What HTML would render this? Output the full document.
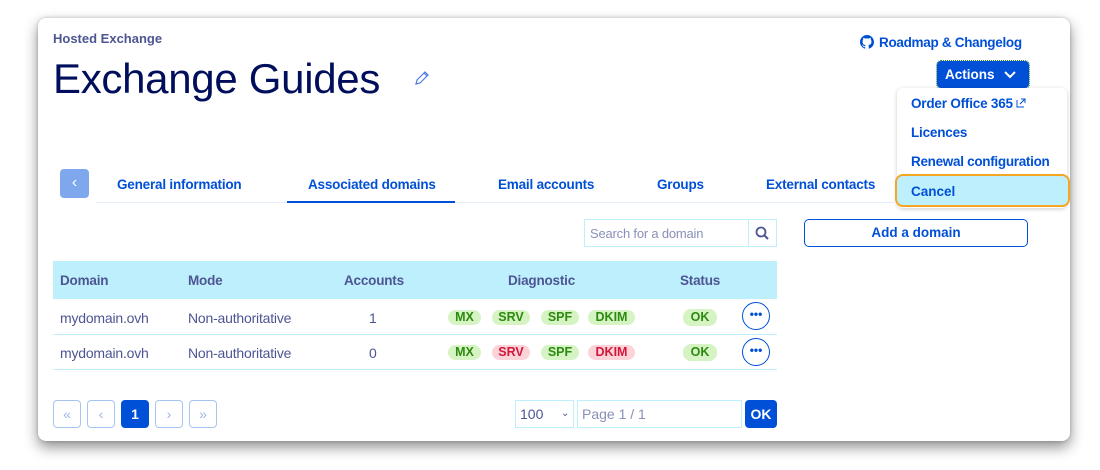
<!DOCTYPE html>
<html><head><meta charset="utf-8"><style>
*{box-sizing:border-box;margin:0;padding:0}
body{width:1100px;height:470px;background:#fff;font-family:"Liberation Sans",sans-serif;position:relative;overflow:hidden}
.card{position:absolute;left:38px;top:18px;width:1032px;height:423px;background:#fff;border-radius:8px;box-shadow:0 6px 14px rgba(0,0,0,.45),0 0 3px rgba(0,0,0,.2)}
.a{position:absolute;white-space:nowrap}
.b{font-weight:bold}
.blue{color:#0050d7}
.navy{color:#4d5592}
.tab{position:absolute;top:177px;font-size:13.5px;font-weight:bold;color:#0050d7;letter-spacing:-0.2px}
.pill{position:absolute;height:15px;border-radius:8px;font-size:12.5px;font-weight:bold;text-align:center;line-height:15px}
.g{background:#d6f3c4;color:#2d8a10}
.r{background:#fcd3d9;color:#d3173a}
.td{position:absolute;font-size:14px;color:#4d5592;letter-spacing:-0.2px}
.th{position:absolute;top:273px;font-size:13.5px;font-weight:bold;color:#4d5592;letter-spacing:-0.2px}
.dots{position:absolute;left:742px;width:28px;height:28px;border:1.5px solid #0050d7;border-radius:50%;color:#0050d7;font-weight:bold;text-align:center;line-height:22px;font-size:12px}
.pg{position:absolute;top:400px;width:28px;height:28px;border:1px solid #a7c3f0;border-radius:4px;color:#9cb6e6;text-align:center;line-height:26px;font-size:14px}
</style></head><body>
<div class="card"></div>
<div class="a b navy" style="left:53px;top:31px;font-size:13px">Hosted Exchange</div>
<div class="a" style="left:53px;top:55px;font-size:42px;color:#000e5c;letter-spacing:-0.3px">Exchange Guides</div>
<svg class="a" style="left:414px;top:70px" width="16" height="16" viewBox="0 0 16 16"><path d="M2 14l1-4 8-8 3 3-8 8z M10 3l3 3" fill="none" stroke="#4f7ae0" stroke-width="1.2"/></svg>
<svg class="a" style="left:860px;top:35px" width="14" height="14" viewBox="0 0 16 16"><path fill="#0050d7" d="M8 0C3.6 0 0 3.6 0 8c0 3.5 2.3 6.5 5.5 7.6.4.1.5-.2.5-.4v-1.4c-2.2.5-2.7-1-2.7-1-.4-.9-.9-1.2-.9-1.2-.7-.5.1-.5.1-.5.8.1 1.2.8 1.2.8.7 1.300 1.9.9 2.3.7.1-.5.3-.9.5-1.1-1.8-.2-3.6-.9-3.6-4 0-.9.3-1.6.8-2.100-.1-.2-.4-1 .1-2.100 0 0 .7-.2 2.2.8.6-.2 1.3-.3 2-.3s1.4.1 2 .3c1.5-1 2.2-.8 2.2-.8.4 1.1.2 1.9.1 2.1.5.6.8 1.3.8 2.1 0 3.1-1.9 3.7-3.6 3.9.3.3.5.8.5 1.5v2.2c0 .2.1.5.6.4C13.7 14.5 16 11.5 16 8c0-4.4-3.6-8-8-8z"/></svg>
<div class="a b blue" style="left:879px;top:35px;font-size:13.5px;letter-spacing:-0.3px">Roadmap &amp; Changelog</div>
<div class="a" style="left:937px;top:61px;width:92px;height:27px;background:#0050d7;border-radius:4px;outline:1px dotted #2a8a2a;color:#fff;font-weight:bold;font-size:13.5px;line-height:27px;padding-left:8px">Actions <svg style="position:absolute;left:66px;top:9px" width="14" height="9" viewBox="0 0 14 9"><path d="M2 2l5 5 5-5" fill="none" stroke="#fff" stroke-width="2"/></svg></div>
<div class="a" style="left:897px;top:88px;width:170px;height:120px;background:#fff;border-radius:6px;box-shadow:0 1px 4px rgba(0,0,0,.2)"></div>
<div class="a b blue" style="left:911px;top:96px;font-size:13.5px;letter-spacing:-0.2px">Order Office 365 <svg width="10" height="10" viewBox="0 0 10 10"><path d="M1 2v7h7M5 1h4v4M9 1L4 6" fill="none" stroke="#0050d7" stroke-width="1"/></svg></div>
<div class="a b blue" style="left:911px;top:125px;font-size:13.5px;letter-spacing:-0.2px">Licences</div>
<div class="a b blue" style="left:911px;top:154px;font-size:13.5px;letter-spacing:-0.3px">Renewal configuration</div>
<div class="a" style="left:895px;top:174px;width:175px;height:33px;background:#bdeffd;border:2.5px solid #f5a623;border-radius:8px"></div>
<div class="a b blue" style="left:911px;top:184px;font-size:13.5px">Cancel</div>
<div class="a" style="left:60px;top:169px;width:29px;height:29px;background:#7fa7ee;border-radius:4px;color:#fff;text-align:center;line-height:27px;font-size:16px">‹</div>
<div class="a" style="left:96px;top:202px;width:800px;height:1px;background:#e6eef9"></div>
<div class="a" style="left:287px;top:201px;width:168px;height:2px;background:#0050d7"></div>
<div class="tab" style="left:117px">General information</div>
<div class="tab" style="left:308px">Associated domains</div>
<div class="tab" style="left:498px">Email accounts</div>
<div class="tab" style="left:657px">Groups</div>
<div class="tab" style="left:766px">External contacts</div>
<div class="a" style="left:584px;top:219px;width:193px;height:28px;border:1px solid #bdeffd"></div>
<div class="a" style="left:748px;top:219px;width:1px;height:28px;background:#bdeffd"></div>
<div class="a" style="left:590px;top:226px;font-size:13px;color:#8a90b8;letter-spacing:-0.2px">Search for a domain</div>
<svg class="a" style="left:755px;top:226px" width="14" height="14" viewBox="0 0 14 14"><circle cx="6" cy="6" r="4.5" fill="none" stroke="#4d5592" stroke-width="1.8"/><path d="M9.5 9.5l3.5 3.5" stroke="#4d5592" stroke-width="2"/></svg>
<div class="a b blue" style="left:804px;top:219px;width:224px;height:28px;border:1px solid #0050d7;border-radius:5px;text-align:center;line-height:26px;font-size:13.5px">Add a domain</div>
<div class="a" style="left:53px;top:261px;width:724px;height:38px;background:#bdeffd"></div>
<div class="th" style="left:60px">Domain</div><div class="th" style="left:188px">Mode</div><div class="th" style="left:344px">Accounts</div><div class="th" style="left:508px">Diagnostic</div><div class="th" style="left:680px">Status</div>
<div class="a" style="left:53px;top:334px;width:724px;height:1px;background:#bdeffd"></div>
<div class="a" style="left:53px;top:369px;width:724px;height:1px;background:#bdeffd"></div>
<div class="td" style="left:60px;top:310px">mydomain.ovh</div><div class="td" style="left:188px;top:310px">Non-authoritative</div><div class="td" style="left:369px;top:310px">1</div>
<div class="td" style="left:60px;top:345px">mydomain.ovh</div><div class="td" style="left:188px;top:345px">Non-authoritative</div><div class="td" style="left:369px;top:345px">0</div>
<div class="pill g" style="left:448px;top:310px;width:33px">MX</div><div class="pill g" style="left:492px;top:310px;width:38px">SRV</div><div class="pill g" style="left:541px;top:310px;width:38px">SPF</div><div class="pill g" style="left:588px;top:310px;width:47px">DKIM</div><div class="pill g" style="left:683px;top:309px;width:34px;height:17px;line-height:17px">OK</div>
<div class="pill g" style="left:448px;top:345px;width:33px">MX</div><div class="pill r" style="left:492px;top:345px;width:38px">SRV</div><div class="pill g" style="left:541px;top:345px;width:38px">SPF</div><div class="pill r" style="left:588px;top:345px;width:47px">DKIM</div><div class="pill g" style="left:683px;top:344px;width:34px;height:17px;line-height:17px">OK</div>
<div class="dots" style="top:302px">•••</div><div class="dots" style="top:338px">•••</div>
<div class="pg" style="left:53px">«</div><div class="pg" style="left:87px">‹</div>
<div class="pg" style="left:121px;background:#0050d7;border-color:#0050d7;color:#fff;font-weight:bold">1</div>
<div class="pg" style="left:155px">›</div><div class="pg" style="left:189px">»</div>
<div class="a" style="left:515px;top:400px;width:59px;height:28px;border:1px solid #bdeffd;font-size:14px;color:#4d5592;line-height:26px;padding-left:4px">100 <span style="position:absolute;left:45px;font-size:10px">⌄</span></div>
<div class="a" style="left:577px;top:400px;width:165px;height:28px;border:1px solid #bdeffd;font-size:14px;color:#8a90b8;line-height:26px;padding-left:4px">Page 1 / 1</div>
<div class="a b" style="left:745px;top:400px;width:32px;height:28px;background:#0050d7;color:#fff;border-radius:4px;text-align:center;line-height:28px;font-size:14px">OK</div>
</body></html>
